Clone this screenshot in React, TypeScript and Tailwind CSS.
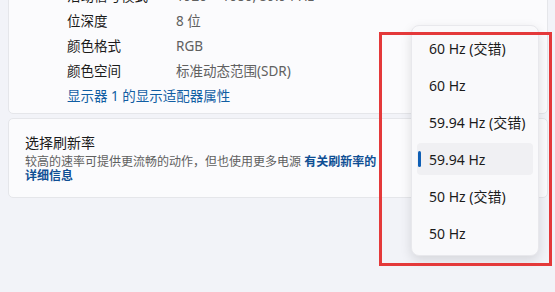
import React from 'react';

const FONT = { fontFamily: '"Noto Sans", "Noto Sans CJK SC", sans-serif' };

const ROWS = [
  { label: '活动信号模式', value: '1920 × 1080, 59.94 Hz' },
  { label: '位深度', value: '8 位' },
  { label: '颜色格式', value: 'RGB' },
  { label: '颜色空间', value: '标准动态范围(SDR)' },
];

const RATES = ['60 Hz (交错)', '60 Hz', '59.94 Hz (交错)', '59.94 Hz', '50 Hz (交错)', '50 Hz'];

export default function App() {
  return (
    <div className="relative w-[555px] h-[292px] overflow-hidden bg-[#f2f3f8]" style={FONT}>
      <div className="flex flex-col gap-[4px] pl-[8px] pr-[7px]">
        {/* display info card, scrolled up past its top */}
        <div className="-mt-[20px] h-[134px] rounded-b-[5px] border border-[#e5e6ea] bg-[#fbfbfd] pl-[58px] pt-[3px]">
          {ROWS.map((row) => (
            <div key={row.label} className="flex h-[25px] items-center text-[13.5px]">
              <span className="w-[109px] text-[#1b1b1b]">{row.label}</span>
              <span className="text-[#606060]">{row.value}</span>
            </div>
          ))}
          <div className="flex h-[25px] items-center text-[13.5px] text-[#115ea3]">
            显示器 1 的显示适配器属性
          </div>
        </div>

        {/* refresh rate card */}
        <div className="h-[80px] rounded-[5px] border border-[#e5e6ea] bg-[#fbfbfd] pl-[16px] pt-[14px]">
          <div className="text-[14px] leading-[20px] text-[#1b1b1b]">选择刷新率</div>
          <div className="mt-[2px] w-[380px] text-[12px] leading-[14px] text-[#5f5f5f]">
            较高的速率可提供更流畅的动作，但也使用更多电源{' '}
            <span className="font-bold text-[#0f4f94]">
              有关刷新率的
              <br />
              详细信息
            </span>
          </div>
        </div>
      </div>

      {/* refresh rate dropdown */}
      <div className="absolute left-[411px] top-[25px] w-[128px] rounded-[8px] border border-[#e8e8ec] bg-[#f9f9fb] px-[5px] py-[6px] shadow-[0_4px_12px_rgba(0,0,0,0.12)]">
        {RATES.map((rate, i) => (
          <div
            key={rate}
            className={`relative mb-[5px] flex h-[32px] items-center rounded-[4px] pl-[12px] text-[14px] text-[#1b1b1b] last:mb-0 ${
              i === 3 ? 'bg-[#f0f0f3]' : ''
            }`}
          >
            {i === 3 && (
              <span className="absolute left-[1px] top-[8px] h-[16px] w-[3px] rounded-full bg-[#0f5fb5]" />
            )}
            {rate}
          </div>
        ))}
      </div>

      {/* red highlight box */}
      <div className="pointer-events-none absolute left-[379px] top-[32px] h-[234px] w-[173px] border-[3px] border-[#e4393a]" />
    </div>
  );
}
